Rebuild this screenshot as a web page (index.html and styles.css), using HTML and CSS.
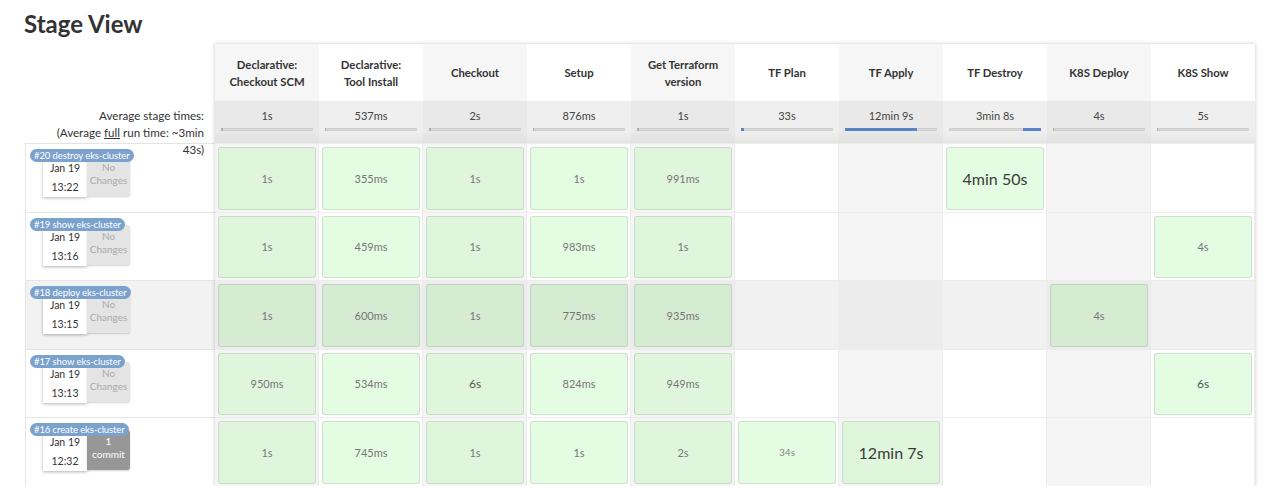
FILE: index.html
```html
<!DOCTYPE html>
<html>
<head>
<meta charset="utf-8">
<link rel="stylesheet" href="styles.css">
</head>
<body>
<div class="page">
  <h2 class="title">Stage View</h2>
  <div class="stage-view">
    <div class="left">
      <div class="left-head"></div>
      <div class="avg-label">Average stage times:<br>(Average <u>full</u> run time: ~3min<br>43s)</div>
      <div class="run-label">
        <span class="badge">#20 destroy eks-cluster</span>
        <div class="run-meta"><div class="date">Jan 19<br>13:22</div><div class="changes">No<br>Changes</div></div>
      </div>
      <div class="run-label">
        <span class="badge">#19 show eks-cluster</span>
        <div class="run-meta"><div class="date">Jan 19<br>13:16</div><div class="changes">No<br>Changes</div></div>
      </div>
      <div class="run-label hover">
        <span class="badge">#18 deploy eks-cluster</span>
        <div class="run-meta"><div class="date">Jan 19<br>13:15</div><div class="changes">No<br>Changes</div></div>
      </div>
      <div class="run-label">
        <span class="badge">#17 show eks-cluster</span>
        <div class="run-meta"><div class="date">Jan 19<br>13:13</div><div class="changes">No<br>Changes</div></div>
      </div>
      <div class="run-label">
        <span class="badge">#16 create eks-cluster</span>
        <div class="run-meta"><div class="date">Jan 19<br>12:32</div><div class="changes commit">1<br>commit</div></div>
      </div>
    </div>
    <div class="table">
      <div class="row head">
        <div class="h">Declarative: Checkout SCM</div>
        <div class="h">Declarative: Tool Install</div>
        <div class="h">Checkout</div>
        <div class="h">Setup</div>
        <div class="h">Get Terraform version</div>
        <div class="h">TF Plan</div>
        <div class="h">TF Apply</div>
        <div class="h">TF Destroy</div>
        <div class="h">K8S Deploy</div>
        <div class="h">K8S Show</div>
      </div>
      <div class="row avg">
        <div class="a"><span>1s</span><div class="bar"><i class="fill grey" style="width:2%"></i></div></div>
        <div class="a"><span>537ms</span><div class="bar"><i class="fill grey" style="width:1%"></i></div></div>
        <div class="a"><span>2s</span><div class="bar"><i class="fill grey" style="width:2%"></i></div></div>
        <div class="a"><span>876ms</span><div class="bar"><i class="fill grey" style="width:1%"></i></div></div>
        <div class="a"><span>1s</span><div class="bar"><i class="fill grey" style="width:2%"></i></div></div>
        <div class="a"><span>33s</span><div class="bar"><i class="fill" style="width:3%"></i></div></div>
        <div class="a"><span>12min 9s</span><div class="bar"><i class="fill" style="width:78%"></i></div></div>
        <div class="a"><span>3min 8s</span><div class="bar"><i class="fill" style="width:20%;margin-left:80%"></i></div></div>
        <div class="a"><span>4s</span><div class="bar"><i class="fill grey" style="width:1%"></i></div></div>
        <div class="a"><span>5s</span><div class="bar"><i class="fill grey" style="width:1%"></i></div></div>
      </div>
      <div class="row run">
        <div class="c"><div class="box">1s</div></div>
        <div class="c"><div class="box">355ms</div></div>
        <div class="c"><div class="box">1s</div></div>
        <div class="c"><div class="box">1s</div></div>
        <div class="c"><div class="box">991ms</div></div>
        <div class="c"></div>
        <div class="c"></div>
        <div class="c"><div class="box big">4min 50s</div></div>
        <div class="c"></div>
        <div class="c"></div>
      </div>
      <div class="row run">
        <div class="c"><div class="box">1s</div></div>
        <div class="c"><div class="box">459ms</div></div>
        <div class="c"><div class="box">1s</div></div>
        <div class="c"><div class="box">983ms</div></div>
        <div class="c"><div class="box">1s</div></div>
        <div class="c"></div>
        <div class="c"></div>
        <div class="c"></div>
        <div class="c"></div>
        <div class="c"><div class="box">4s</div></div>
      </div>
      <div class="row run hover">
        <div class="c"><div class="box">1s</div></div>
        <div class="c"><div class="box">600ms</div></div>
        <div class="c"><div class="box">1s</div></div>
        <div class="c"><div class="box">775ms</div></div>
        <div class="c"><div class="box">935ms</div></div>
        <div class="c"></div>
        <div class="c"></div>
        <div class="c"></div>
        <div class="c"><div class="box">4s</div></div>
        <div class="c"></div>
      </div>
      <div class="row run">
        <div class="c"><div class="box">950ms</div></div>
        <div class="c"><div class="box">534ms</div></div>
        <div class="c"><div class="box med">6s</div></div>
        <div class="c"><div class="box">824ms</div></div>
        <div class="c"><div class="box">949ms</div></div>
        <div class="c"></div>
        <div class="c"></div>
        <div class="c"></div>
        <div class="c"></div>
        <div class="c"><div class="box med">6s</div></div>
      </div>
      <div class="row run">
        <div class="c"><div class="box">1s</div></div>
        <div class="c"><div class="box">745ms</div></div>
        <div class="c"><div class="box">1s</div></div>
        <div class="c"><div class="box">1s</div></div>
        <div class="c"><div class="box">2s</div></div>
        <div class="c"><div class="box small">34s</div></div>
        <div class="c"><div class="box big">12min 7s</div></div>
        <div class="c"></div>
        <div class="c"></div>
        <div class="c"></div>
      </div>
    </div>
  </div>
</div>
</body>
</html>
```
FILE: styles.css
```css
html, body {
  margin: 0;
  background: #fff;
}
body {
  font-family: Lato, "Open Sans", sans-serif;
  color: #333;
}
.page {
  padding: 8px 0 0 24px;
}
.title {
  margin: 0;
  font-size: 24px;
  font-weight: 700;
  line-height: 32px;
  color: #333;
}
.stage-view {
  display: flex;
  margin-top: 4px;
}
.left {
  width: 191px;
  flex: none;
}
.left-head {
  height: 57px;
}
.avg-label {
  height: 42px;
  box-sizing: border-box;
  padding: 6px 11px 0 0;
  text-align: right;
  font-size: 11.6px;
  line-height: 17px;
  color: #333;
}
.run-label {
  height: 68.5px;
  box-sizing: border-box;
  display: flex;
  flex-direction: column;
  align-items: flex-start;
  margin-left: 1px;
  border-top: 1px solid #e4e4e4;
  border-left: 1px solid #e4e4e4;
  padding: 5px 0 0 4px;
}
.run-label.hover {
  background: #f2f2f2;
}
.badge {
  position: relative;
  z-index: 1;
  display: block;
  height: 13px;
  line-height: 13px;
  padding: 0 4px;
  border-radius: 7px;
  background: #7ba1cd;
  color: #fff;
  font-size: 9.5px;
  letter-spacing: -0.1px;
  white-space: nowrap;
}
.run-meta {
  display: flex;
  margin: -6px 0 0 13px;
}
.date {
  width: 44px;
  height: 41px;
  box-sizing: border-box;
  padding-top: 3px;
  background: #fff;
  box-shadow: 0 1px 3px rgba(0, 0, 0, 0.3);
  text-align: center;
  font-size: 10.5px;
  line-height: 19px;
  color: #333;
}
.changes {
  width: 43px;
  height: 40px;
  box-sizing: border-box;
  padding-top: 5px;
  background: #e4e4e4;
  border-radius: 0 3px 3px 0;
  box-shadow: 0 1px 2px rgba(0, 0, 0, 0.18);
  text-align: center;
  font-size: 10px;
  line-height: 13px;
  color: #aaa;
}
.changes.commit {
  background: #979797;
  color: #fff;
}
.table {
  width: 1040px;
  flex: none;
  box-shadow: 0 0 4px rgba(0, 0, 0, 0.22);
}
.row {
  display: grid;
  grid-template-columns: repeat(10, 104px);
}
.head .h {
  height: 57px;
  box-sizing: border-box;
  display: flex;
  align-items: center;
  justify-content: center;
  text-align: center;
  padding: 0 12px;
  font-weight: 700;
  font-size: 11.3px;
  line-height: 17px;
  color: #333;
  background: #fff;
}
.head .h:nth-child(odd) {
  background: #f6f6f6;
}
.avg .a {
  height: 42px;
  box-sizing: border-box;
  padding-top: 6px;
  text-align: center;
  font-size: 11px;
  line-height: 17px;
  color: #444;
  background: linear-gradient(to bottom, #efefef 0%, #efefef 72%, #e6e6e6 100%);
}
.avg .a:nth-child(odd) {
  background: linear-gradient(to bottom, #e9e9e9 0%, #e9e9e9 72%, #e0e0e0 100%);
}
.bar {
  display: flex;
  height: 3px;
  margin: 4px 6px 0;
  background: #dadada;
  border-radius: 1px;
  box-shadow: inset 0 0 0 1px rgba(0, 0, 0, 0.05);
}
.fill {
  display: block;
  height: 3px;
  background: #5b84c4;
}
.fill.grey {
  background: #b0b0b0;
}
.run .c {
  height: 68.5px;
  box-sizing: border-box;
  padding: 3px 2px 2px 3px;
  border-top: 1px solid #ececec;
  border-right: 1px solid #ececec;
  background: #fff;
}
.run .c:nth-child(odd) {
  background: #f5f5f5;
}
.run.hover .c {
  background: #f1f1f1;
}
.run.hover .c:nth-child(odd) {
  background: #ececec;
}
.box {
  height: 100%;
  box-sizing: border-box;
  display: flex;
  align-items: center;
  justify-content: center;
  border: 1px solid rgba(0, 0, 0, 0.1);
  border-radius: 3px;
  background: #e4fce2;
  font-size: 11px;
  color: #777;
}
.run .c:nth-child(odd) .box {
  background: #dff6dc;
}
.run.hover .box,
.run.hover .c:nth-child(odd) .box {
  background: #d5ecd2;
}
.box.big {
  font-size: 16px;
  color: #3a3a3a;
}
.box.med {
  font-size: 12px;
  color: #555;
}
.box.small {
  font-size: 10px;
  color: #888;
}
```
